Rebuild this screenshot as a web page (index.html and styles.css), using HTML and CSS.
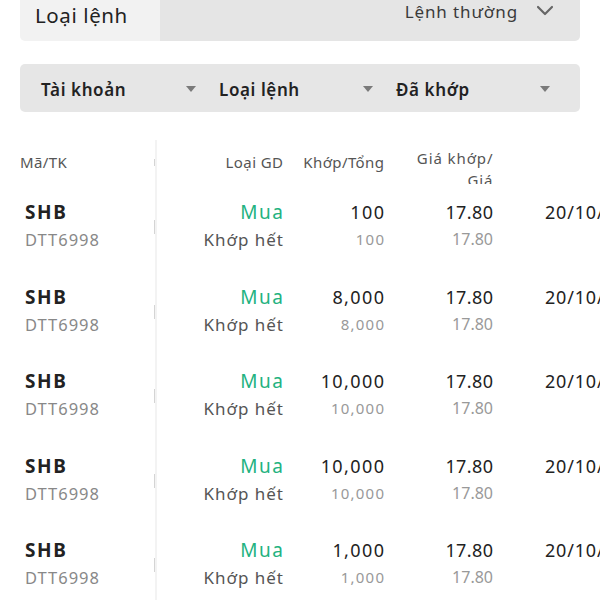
FILE: index.html
```html
<!DOCTYPE html>
<html lang="vi">
<head>
<meta charset="utf-8">
<link rel="stylesheet" href="styles.css">
</head>
<body>
<div class="top">
  <div class="top-label">Loại lệnh</div>
  <div class="top-value">
    <span>Lệnh thường</span>
    <svg class="chev" width="18" height="12" viewBox="0 0 18 12"><path d="M2 2 L9 9 L16 2" fill="none" stroke="#666" stroke-width="2.2" stroke-linecap="round" stroke-linejoin="round"/></svg>
  </div>
</div>

<div class="filters">
  <div class="filter"><span>Tài khoản</span><i class="tri"></i></div>
  <div class="filter"><span>Loại lệnh</span><i class="tri"></i></div>
  <div class="filter"><span>Đã khớp</span><i class="tri"></i></div>
</div>

<div class="table">
  <div class="row head">
    <div class="c-code"><span class="h">Mã/TK</span></div>
    <div class="c-type"><span class="h">Loại GD</span></div>
    <div class="c-qty"><span class="h">Khớp/Tổng</span></div>
    <div class="c-price"><span class="h two">Giá khớp/<br>Giá</span></div>
    <div class="c-date"></div>
  </div>

  <div class="row">
    <div class="c-code"><b class="sym">SHB</b><span class="acc">DTT6998</span></div>
    <div class="c-type"><span class="buy">Mua</span><span class="st">Khớp hết</span></div>
    <div class="c-qty"><span class="q">100</span><span class="g">100</span></div>
    <div class="c-price"><span class="p">17.80</span><span class="g2">17.80</span></div>
    <div class="c-date"><span class="d">20/10/2023</span><span class="blank"></span></div>
  </div>
  <div class="row">
    <div class="c-code"><b class="sym">SHB</b><span class="acc">DTT6998</span></div>
    <div class="c-type"><span class="buy">Mua</span><span class="st">Khớp hết</span></div>
    <div class="c-qty"><span class="q">8,000</span><span class="g">8,000</span></div>
    <div class="c-price"><span class="p">17.80</span><span class="g2">17.80</span></div>
    <div class="c-date"><span class="d">20/10/2023</span><span class="blank"></span></div>
  </div>
  <div class="row">
    <div class="c-code"><b class="sym">SHB</b><span class="acc">DTT6998</span></div>
    <div class="c-type"><span class="buy">Mua</span><span class="st">Khớp hết</span></div>
    <div class="c-qty"><span class="q">10,000</span><span class="g">10,000</span></div>
    <div class="c-price"><span class="p">17.80</span><span class="g2">17.80</span></div>
    <div class="c-date"><span class="d">20/10/2023</span><span class="blank"></span></div>
  </div>
  <div class="row">
    <div class="c-code"><b class="sym">SHB</b><span class="acc">DTT6998</span></div>
    <div class="c-type"><span class="buy">Mua</span><span class="st">Khớp hết</span></div>
    <div class="c-qty"><span class="q">10,000</span><span class="g">10,000</span></div>
    <div class="c-price"><span class="p">17.80</span><span class="g2">17.80</span></div>
    <div class="c-date"><span class="d">20/10/2023</span><span class="blank"></span></div>
  </div>
  <div class="row">
    <div class="c-code"><b class="sym">SHB</b><span class="acc">DTT6998</span></div>
    <div class="c-type"><span class="buy">Mua</span><span class="st">Khớp hết</span></div>
    <div class="c-qty"><span class="q">1,000</span><span class="g">1,000</span></div>
    <div class="c-price"><span class="p">17.80</span><span class="g2">17.80</span></div>
    <div class="c-date"><span class="d">20/10/2023</span><span class="blank"></span></div>
  </div>
</div>
</body>
</html>
```

FILE: styles.css
```css
html, body {
  margin: 0;
  padding: 0;
  background: #fff;
  overflow: hidden;
  width: 600px;
  height: 600px;
}
body {
  font-family: "Noto Sans", "DejaVu Sans", sans-serif;
  color: #222;
}

.top {
  margin: 0 20px;
  height: 41px;
  display: flex;
  border-radius: 0 0 5px 5px;
  overflow: hidden;
}
.top-label {
  width: 125px;
  padding-left: 15px;
  background: #f2f2f2;
  font-size: 20.5px;
  letter-spacing: 0.6px;
  line-height: 30px;
  color: #222;
}
.top-value {
  flex: 1;
  background: #e5e5e5;
  display: flex;
  justify-content: flex-end;
  align-items: flex-start;
  font-size: 17px;
  letter-spacing: 0.9px;
  line-height: 24px;
  color: #3a3a3a;
  padding-right: 26px;
}
.chev {
  margin-left: 18px;
  margin-top: 5px;
}

.filters {
  margin: 23px 20px 0;
  height: 48px;
  background: #e6e6e6;
  border-radius: 5px;
  display: grid;
  grid-template-columns: 178px 177px 177px;
  padding-left: 21px;
  padding-top: 3px;
  box-sizing: border-box;
}
.filter {
  display: flex;
  align-items: center;
  justify-content: space-between;
  padding-right: 23px;
  font-size: 17px;
  font-weight: 600;
  letter-spacing: 0.6px;
  color: #222;
}
.tri {
  width: 0;
  height: 0;
  margin-bottom: 2px;
  border-left: 5px solid transparent;
  border-right: 5px solid transparent;
  border-top: 6px solid #7a7a7a;
}

.table {
  margin-top: 28px;
  width: 700px;
}
.row {
  display: grid;
  grid-template-columns: 157px 126px 101px 109px 200px;
  height: 84.5px;
  align-items: stretch;
}
.row > div {
  display: flex;
  flex-direction: column;
  justify-content: center;
  align-items: flex-end;
  line-height: 27px;
}
.row > .c-code {
  align-items: flex-start;
  padding-left: 25px;
  border-right: 2px solid #f3f3f3;
  position: relative;
}
.row > .c-code::after {
  content: "";
  position: absolute;
  right: 0;
  top: 36px;
  width: 1px;
  height: 14px;
  background: #d4d4d4;
}
.row > .c-date {
  align-items: flex-start;
  padding-left: 52px;
}
.blank {
  height: 27px;
}

.head {
  height: 44px;
  overflow: hidden;
}
.head > div {
  font-size: 15px;
  letter-spacing: 0.4px;
  color: #555;
  overflow: hidden;
}
.head > .c-code {
  padding-left: 20px;
}
.head > .c-code::after {
  top: 19px;
  height: 7px;
}
.h {
  line-height: 20px;
  margin-right: -0.4px;
}
.head > div.c-price {
  justify-content: flex-start;
  padding-top: 7px;
  letter-spacing: 0.9px;
}
.two {
  text-align: right;
  line-height: 22px;
}

.sym {
  font-size: 19px;
  font-weight: 700;
  letter-spacing: 1.6px;
  color: #222;
}
.acc {
  font-size: 16.5px;
  letter-spacing: 1px;
  color: #888;
}
.buy {
  font-size: 19px;
  letter-spacing: 1.6px;
  margin-right: -1.6px;
  color: #23b27f;
}
.st {
  font-size: 17px;
  letter-spacing: 1px;
  margin-right: -1px;
  color: #555;
}
.q {
  font-size: 18px;
  letter-spacing: 1.4px;
  margin-right: -1.4px;
  color: #222;
}
.p {
  font-size: 18px;
  letter-spacing: 0.4px;
  margin-right: -0.4px;
  color: #222;
}
.d {
  font-size: 18px;
  letter-spacing: 0.8px;
  color: #222;
}
.g {
  font-size: 15px;
  letter-spacing: 1.2px;
  margin-right: -1.2px;
  color: #999;
}
.g2 {
  font-size: 16px;
  color: #999;
}
```
